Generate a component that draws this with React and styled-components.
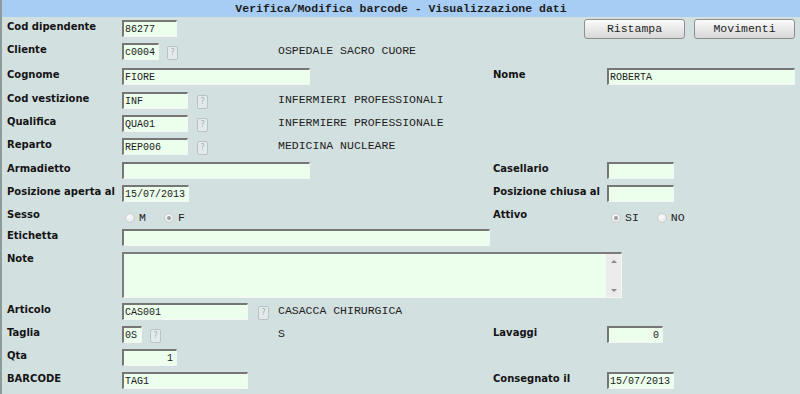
import React from 'react';
import styled, { createGlobalStyle } from 'styled-components';

const GlobalStyle = createGlobalStyle`
  html, body {
    margin: 0;
    padding: 0;
    background: #d3e0e0;
    overflow: hidden;
  }
`;

const mono = `"Liberation Mono", "Courier New", monospace`;

const Page = styled.div`
  width: 800px;
  height: 394px;
  box-sizing: border-box;
  background: #d3e0e0;
  border-left: 2px solid #8d9b9b;
  overflow: hidden;
`;

const TitleBar = styled.div`
  height: 17px;
  background: #a8cdf4;
  font-family: ${mono};
  font-weight: bold;
  font-size: 11.5px;
  line-height: 17px;
  color: #1c1c1c;
  text-align: center;
  margin-left: -2px;
  padding-left: 2px;
`;

const Form = styled.div`
  display: grid;
  grid-template-columns: 115px 156px 215px 114px 1fr;
  grid-template-rows: 23px 25px 24px 23px 23px 24px 23px 23px 21px 23px 51px 23px 23px 23px 24px;
  padding: 1px 6px 0 5px;
`;

const Label = styled.div`
  grid-column: ${p => p.col || 1};
  font-family: "DejaVu Sans", Verdana, sans-serif;
  font-weight: bold;
  font-size: 10px;
  line-height: 12px;
  color: #141414;
  padding-top: 3px;
  white-space: nowrap;
`;

const Cell = styled.div`
  grid-column: ${p => p.col} / span ${p => p.span || 1};
  display: flex;
  align-items: flex-start;
  gap: ${p => p.gap || 8}px;
  padding-top: 1px;
  justify-content: ${p => p.end ? 'flex-end' : 'flex-start'};
`;

const Box = styled.div`
  width: ${p => p.w}px;
  height: 17px;
  box-sizing: border-box;
  background: #ecfeec;
  border-top: 2px solid #767676;
  border-left: 2px solid #767676;
  border-right: 1px solid #f3f6f3;
  border-bottom: 1px solid #f3f6f3;
  font-family: ${mono};
  font-size: 10px;
  line-height: 15px;
  color: #202020;
  padding: 0 3px 0 1px;
  text-align: ${p => p.right ? 'right' : 'left'};
  white-space: nowrap;
  overflow: hidden;
  margin-top: 1px;
`;

const Lookup = styled.div`
  width: 11px;
  height: 14px;
  margin-top: 4px;
  box-sizing: border-box;
  border: 1px solid #b9c3c3;
  border-radius: 2px;
  background: #e3eaea;
  color: #a8b0b0;
  font-family: "DejaVu Sans", sans-serif;
  font-size: 8px;
  line-height: 12px;
  text-align: center;
`;

const Desc = styled.div`
  grid-column: 3;
  font-family: ${mono};
  font-size: 11.5px;
  line-height: 14px;
  color: #1e1e1e;
  padding-top: 3px;
  white-space: nowrap;
`;

const Button = styled.div`
  width: 101px;
  height: 20px;
  box-sizing: border-box;
  border: 1px solid #8e8e8e;
  border-radius: 3px;
  background: linear-gradient(#fbfbfb, #e9e9e9 50%, #d8d8d8);
  font-family: ${mono};
  font-size: 11.5px;
  line-height: 18px;
  text-align: center;
  color: #1e1e1e;
`;

const Area = styled.div`
  width: 500px;
  height: 46px;
  box-sizing: border-box;
  display: flex;
  background: #ecfeec;
  border-top: 2px solid #7c7c7c;
  border-left: 2px solid #7c7c7c;
  border-right: 1px solid #f3f6f3;
  border-bottom: 1px solid #f3f6f3;
  margin-top: 1px;
`;

const AreaText = styled.div`
  flex: 1;
`;

const Scroll = styled.div`
  width: 15px;
  background: #ececec;
  display: flex;
  flex-direction: column;
  justify-content: space-between;
  align-items: center;
  padding: 6px 0 5px;
  box-sizing: border-box;
`;

const Arrow = styled.div`
  width: 0;
  height: 0;
  border-left: 3px solid transparent;
  border-right: 3px solid transparent;
  ${p => p.up ? 'border-bottom: 3px solid #8a8a8a;' : 'border-top: 3px solid #8a8a8a;'}
`;

const RadioGroup = styled.div`
  display: flex;
  align-items: center;
  margin-top: 4px;
  margin-left: ${p => p.offset || 0}px;
`;

const Radio = styled.span`
  width: 10px;
  height: 10px;
  box-sizing: border-box;
  border-radius: 50%;
  border: 1px solid #c9cece;
  background: radial-gradient(circle at 40% 35%, #fbfbfb, #dfe3e3);
  display: flex;
  align-items: center;
  justify-content: center;
  &::after {
    content: '';
    width: 4px;
    height: 4px;
    border-radius: 50%;
    background: ${p => p.checked ? '#9a9e9e' : 'transparent'};
  }
`;

const RadioText = styled.span`
  font-family: ${mono};
  font-size: 11.5px;
  color: #1e1e1e;
  margin-left: 4px;
  margin-right: ${p => p.mr || 0}px;
`;

function Field({ col = 2, span, w, value, lookup, right, gap }) {
  return (
    <Cell col={col} span={span} gap={gap}>
      <Box w={w} right={right}>{value}</Box>
      {lookup && <Lookup>?</Lookup>}
    </Cell>
  );
}

export default function App() {
  return (
    <>
      <GlobalStyle />
      <Page>
        <TitleBar>Verifica/Modifica barcode - Visualizzazione dati</TitleBar>
        <Form>
          <Label>Cod dipendente</Label>
          <Field w={55} value="86277" />
          <Cell col={4} span={2} end gap={9}>
            <Button>Ristampa</Button>
            <Button>Movimenti</Button>
          </Cell>

          <Label>Cliente</Label>
          <Field w={37} value="c0004" lookup />
          <Desc>OSPEDALE SACRO CUORE</Desc>

          <Label>Cognome</Label>
          <Field span={2} w={188} value="FIORE" />
          <Label col={4}>Nome</Label>
          <Field col={5} w={188} value="ROBERTA" />

          <Label>Cod vestizione</Label>
          <Field w={66} value="INF" lookup gap={9} />
          <Desc>INFERMIERI PROFESSIONALI</Desc>

          <Label>Qualifica</Label>
          <Field w={66} value="QUA01" lookup gap={9} />
          <Desc>INFERMIERE PROFESSIONALE</Desc>

          <Label>Reparto</Label>
          <Field w={66} value="REP006" lookup gap={9} />
          <Desc>MEDICINA NUCLEARE</Desc>

          <Label>Armadietto</Label>
          <Field span={2} w={188} value="" />
          <Label col={4}>Casellario</Label>
          <Field col={5} w={67} value="" />

          <Label>Posizione aperta al</Label>
          <Field w={67} value="15/07/2013" />
          <Label col={4}>Posizione chiusa al</Label>
          <Field col={5} w={67} value="" />

          <Label>Sesso</Label>
          <Cell col={2} span={2}>
            <RadioGroup offset={3}>
              <Radio /><RadioText mr={18}>M</RadioText>
              <Radio checked /><RadioText>F</RadioText>
            </RadioGroup>
          </Cell>
          <Label col={4}>Attivo</Label>
          <Cell col={5}>
            <RadioGroup offset={4}>
              <Radio checked /><RadioText mr={18}>SI</RadioText>
              <Radio /><RadioText>NO</RadioText>
            </RadioGroup>
          </Cell>

          <Label>Etichetta</Label>
          <Field span={2} w={368} value="" />

          <Label>Note</Label>
          <Cell col={2} span={4}>
            <Area>
              <AreaText />
              <Scroll>
                <Arrow up />
                <Arrow />
              </Scroll>
            </Area>
          </Cell>

          <Label>Articolo</Label>
          <Field w={126} value="CAS001" lookup gap={10} />
          <Desc>CASACCA CHIRURGICA</Desc>

          <Label>Taglia</Label>
          <Field w={20} value="0S" lookup />
          <Desc>S</Desc>
          <Label col={4}>Lavaggi</Label>
          <Field col={5} w={56} value="0" right />

          <Label>Qta</Label>
          <Field w={55} value="1" right />

          <Label>BARCODE</Label>
          <Field w={126} value="TAG1" />
          <Label col={4}>Consegnato il</Label>
          <Field col={5} w={67} value="15/07/2013" />
        </Form>
      </Page>
    </>
  );
}
